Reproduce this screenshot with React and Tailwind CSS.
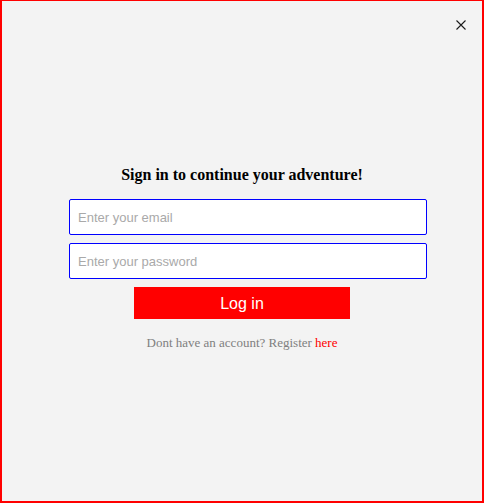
import React from "react";

// Login modal: red-framed panel with close cross, two inputs and a red submit bar.
export default function App() {
  return (
    <div className="flex h-[503px] w-[484px] flex-col border-t border-r-2 border-b-2 border-l-2 border-[#ff0000] bg-[#f3f3f3]">
      <div className="flex justify-end pt-[19px] pr-[16px]">
        <button type="button" aria-label="Close" className="block h-[10px] w-[10px]">
          <svg width="10" height="10" viewBox="0 0 10 10" className="block">
            <path d="M0.5 0.5 L9.5 9.5 M9.5 0.5 L0.5 9.5" stroke="#1a1a1a" strokeWidth="1.1" fill="none" />
          </svg>
        </button>
      </div>

      <div className="mt-[136px] flex flex-col items-center">
        <h1 className="text-[16px] leading-[18px] font-bold text-black [font-family:'Liberation_Serif',serif]">
          Sign in to continue your adventure!
        </h1>

        <div className="mt-[15px] flex w-[346px] flex-col items-start gap-[8px]">
          <input
            type="email"
            placeholder="Enter your email"
            className="h-[36px] w-[358px] shrink-0 rounded-[2px] border border-[#0000ff] bg-white pl-[8px] text-[13px] text-black outline-none [font-family:'Liberation_Sans',sans-serif] placeholder:text-[#a9a9a9]"
          />
          <input
            type="password"
            placeholder="Enter your password"
            className="h-[36px] w-[358px] shrink-0 rounded-[2px] border border-[#0000ff] bg-white pl-[8px] text-[13px] text-black outline-none [font-family:'Liberation_Sans',sans-serif] placeholder:text-[#a9a9a9]"
          />
        </div>

        <button
          type="button"
          className="mt-[8px] h-[32px] w-[216px] bg-[#ff0000] pt-[1px] text-[16px] text-white [font-family:'Liberation_Sans',sans-serif]"
        >
          Log in
        </button>

        <p className="mt-[16px] text-[13px] leading-[15px] text-[#808080] [font-family:'Liberation_Serif',serif]">
          Dont have an account? Register <a href="#" className="text-[#ff0000]">here</a>
        </p>
      </div>
    </div>
  );
}
